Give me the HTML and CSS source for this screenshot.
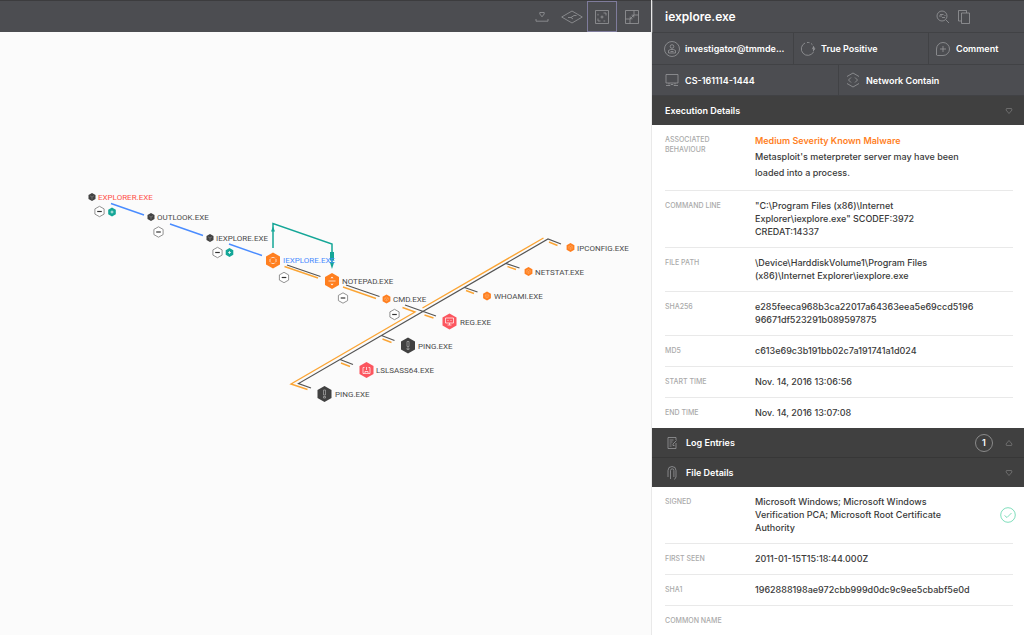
FILE: index.html
```html
<!DOCTYPE html>
<html lang="en">
<head>
<meta charset="utf-8">
<title>iexplore.exe – Process tree</title>
<link rel="stylesheet" href="styles.css">
</head>
<body>
<div class="app">
  <main class="workspace">
    <div class="toolbar" role="toolbar" aria-label="Tree tools">
      <button class="tool" aria-label="Collapse"><svg width="14" height="14" viewBox="0 0 14 14"><path d="M1 9v2.200h12V9M4.800 2.500h4.400v1.500L7 6.800 4.800 4z"/></svg></button>
      <button class="tool" aria-label="Perspective"><svg width="22" height="14" viewBox="0 0 22 14"><path d="M.700 7 11 1 21.300 7 11 13zM7 7.500h3l3-2M10 7.500l2 1.500M13 5.500h2.500"/></svg></button>
      <button class="tool tool-active" aria-label="Fit to screen" aria-pressed="true"><svg width="14" height="14" viewBox="0 0 14 14"><path d="M.5.5h13v13H.5zM8.500 3H11v2.500M3 8.500V11h2.500M3 5.500V3.800M8.500 11h1.700"/><circle cx="7" cy="7" r="1"/></svg></button>
      <button class="tool" aria-label="Expand"><svg width="14" height="14" viewBox="0 0 14 14"><path d="M.5.5h13v13H.5zM.5 9h4.500v4.500M13.500 5H9V.5M5 9l4-4M5.200 6.500v2.300h2.300M6.500 5.200h2.300v2.300"/></svg></button>
    </div>
    <svg class="tree" width="651" height="603" viewBox="0 32 651 603" role="img" aria-label="Process tree">
      <defs>
        <path id="hex" d="M0-8 7-4V4L0 8-7 4V-4z"/>
        <path id="hex-small" d="M0-4.500 3.900-2.300V2.300L0 4.500-3.900 2.300V-2.300z"/>
        <g id="cube"><path d="M0-4 3.500-2V2L0 4-3.500 2V-2z"/><path class="cube-mark" d="M-2-1.200 0 0l2-1.200M0 0v2.500"/></g>
        <g id="minus"><path class="minus-ring" d="M0-5.200 4.600-2.600V2.600L0 5.200-4.600 2.600V-2.600z"/><path class="minus-bar" d="M-2.300 0h4.600"/></g>
        <g id="plus"><path d="M0-4.400 3.800-2.200V2.200L0 4.400-3.800 2.200V-2.200z"/><path class="plus-mark" d="M-1.500 0h3M0-1.500v3"/></g>
        <g id="small-target"><use href="#hex-small"/><path class="small-mark" d="M0-2 1.800-1V1L0 2-1.800 1V-1zM-1.800-1 0 0l1.800-1M0 0v2"/></g>
      </defs>
      <g class="edge edge-blue"><path d="M111 203.500 144 215M170 224l33 11.500M229 244l33 11.500"/></g>
      <g class="edge edge-dark"><path d="M287 265l33.500 11.500M346 285l33.500 11.500M405 305l31 11M311 388l-12.500-4.500L548 239l13 5M381.500 335.500l13 5M340 359.500l13 5M464.500 287.500l13 4.500M506 263.500l13.500 4.500"/></g>
      <g class="edge edge-orange"><path d="M284.500 266.500l33.500 11.500M343 287l33 11.500M402.500 307.500l12.500 4.500-124 72 16.500 5.500M422.500 308l121-70M382.500 339l9 3.500M341 363l9 3.500M424.500 315l9 3M466 290.500l8 3M507.500 266.500l8.500 3M549 242l8.500 3.500"/></g>
      <g class="edge edge-teal"><path d="M273 248v-24.500L332 244v22"/></g>
      <path class="teal" d="M273 226.500l2 5h-4zM330 252h4v8.500h-4zM329.800 262h4.400l-2.200 7z"/>
      <g class="dark"><use href="#cube" x="92" y="197"/><use href="#cube" x="151" y="217"/><use href="#cube" x="210" y="238"/><use href="#hex" x="408" y="345.500"/><use href="#hex" x="324.500" y="394"/></g>
      <g class="orange"><use href="#hex" x="273" y="260.500"/><use href="#hex" x="332" y="281"/><use href="#small-target" x="386.500" y="299"/><use href="#small-target" x="487" y="296"/><use href="#small-target" x="528.500" y="271.500"/><use href="#small-target" x="570.500" y="247.500"/></g>
      <g class="red"><use href="#hex" x="449.500" y="321.500"/><use href="#hex" x="366.500" y="370"/></g>
      <g class="glyph">
        <path d="M271.500 257.500h3M276 259v3M274.500 263.500h-3M270 262v-3M270.300 257.800l.6.600M275.700 257.800l-.6.600M270.300 263.200l.6-.6M275.700 263.200l-.6-.6"/>
        <path d="M328.500 281h7M332 277v1.500M332 283.500v1.500M330.800 278l1.200-1 1.200 1M330.800 284l1.200 1 1.200-1"/>
        <path d="M445.500 318h8v5h-8zM447.500 325h4M449.500 323v2M447.500 320.500h1M450.500 320.500h1"/>
        <path d="M364.500 367.500h-1.500v6h7v-6h-1.500M366.500 367v3M365 373v-1.500h3v1.500"/>
        <path class="glyph-dim" d="M407 341.500h2v5h-2zM407 348h2v1.500h-2zM323.500 390h2v5h-2zM323.500 396.500h2v1.500h-2z"/>
      </g>
      <g><use href="#minus" x="99.500" y="211.500"/><use href="#minus" x="158.500" y="232"/><use href="#minus" x="217.500" y="252.500"/><use href="#minus" x="284" y="277.500"/><use href="#minus" x="343" y="298"/><use href="#minus" x="394.500" y="314.500"/></g>
      <g class="teal"><use href="#plus" x="112" y="212"/><use href="#plus" x="229.500" y="252.500"/></g>
      <g class="names">
        <text class="name-red" x="98" y="200">EXPLORER.EXE</text>
        <text x="157" y="220">OUTLOOK.EXE</text>
        <text x="216" y="241">IEXPLORE.EXE</text>
        <text class="name-blue" x="283" y="263">IEXPLORE.EXE</text>
        <text x="342" y="284">NOTEPAD.EXE</text>
        <text x="393" y="302">CMD.EXE</text>
        <text x="460" y="325">REG.EXE</text>
        <text x="418" y="349">PING.EXE</text>
        <text x="376" y="373">LSLSASS64.EXE</text>
        <text x="335" y="397">PING.EXE</text>
        <text x="494" y="299">WHOAMI.EXE</text>
        <text x="535" y="275">NETSTAT.EXE</text>
        <text x="577" y="251">IPCONFIG.EXE</text>
      </g>
    </svg>
  </main>

  <aside class="panel">
    <header class="panel-title">
      <h1>iexplore.exe</h1>
      <div class="title-actions">
        <button class="icon-button" aria-label="Search events"><svg width="14" height="14" viewBox="0 0 14 14"><circle cx="6" cy="6" r="5"/><path d="M10 10l3 3M4 4.500h3.500M3 6h3M6 7.500h3M8.500 5.500h1"/></svg></button>
        <button class="icon-button" aria-label="Copy"><svg width="14" height="16" viewBox="0 0 14 16"><path d="M4.500 4h8v10.500h-8zM4.500 12h-3V1.500h8V4"/></svg></button>
      </div>
    </header>
    <div class="tiles tiles-three">
      <button class="tile tile-lead"><svg width="16" height="16" viewBox="0 0 16 16"><circle cx="8" cy="8" r="7.500"/><circle cx="8" cy="5.500" r="1.800"/><path d="M4.500 12V9.500L6.500 8.500h3l2 1V12zM6.500 10.500h3"/></svg><span>investigator@tmmde...</span></button>
      <button class="tile"><svg width="16" height="16" viewBox="0 0 16 16"><path d="M5 2a6.500 6.500 0 1 0 8.500 9M7 1.500a6.500 6.500 0 0 1 2.500.2M11 2.400l1.500 1.400M13.500 5.200v5.200M12.300 8.200l1.200-2.400 1.500 2.200-1.500 1.200"/></svg><span>True Positive</span></button>
      <button class="tile"><svg width="16" height="16" viewBox="0 0 16 16"><path d="M1.500 14V8A6.500 6.500 0 1 1 8 14.500H2.500zM8 5v6M5 8h6"/></svg><span>Comment</span></button>
    </div>
    <div class="tiles tiles-two">
      <button class="tile tile-lead"><svg width="16" height="16" viewBox="0 0 16 16"><path d="M2 2.500h12v8.500H2zM5 11v1.500M11 11v1.500M2 13.500h4l1-1h2l1 1h4"/></svg><span>CS-161114-1444</span></button>
      <button class="tile"><svg width="16" height="16" viewBox="0 0 16 16"><path d="M2 4.500 8 1l6 3.500M2 11.500 8 15l6-3.500M6 5.500 3.500 8 6 10.500M10 5.500 12.500 8 10 10.500"/></svg><span>Network Contain</span></button>
    </div>

    <section>
      <h2><button class="section-head" aria-expanded="true"><span class="section-name">Execution Details</span><svg class="caret" width="8" height="8" viewBox="0 0 8 8"><path d="M1.500 1.500h5L7 3 4 6.500 1 3z"/></svg></button></h2>
      <dl class="details">
        <div class="row row-lead"><dt>ASSOCIATED BEHAVIOUR</dt><dd><strong class="severity">Medium Severity Known Malware</strong><br>Metasploit's meterpreter server may have been<br>loaded into a process.</dd></div>
        <div class="row"><dt>COMMAND LINE</dt><dd>"C:\Program Files (x86)\Internet<br>Explorer\iexplore.exe" SCODEF:3972<br>CREDAT:14337</dd></div>
        <div class="row"><dt>FILE PATH</dt><dd>\Device\HarddiskVolume1\Program Files<br>(x86)\Internet Explorer\iexplore.exe</dd></div>
        <div class="row"><dt>SHA256</dt><dd>e285feeca968b3ca22017a64363eea5e69ccd5196<br>96671df523291b089597875</dd></div>
        <div class="row"><dt>MD5</dt><dd>c613e69c3b191bb02c7a191741a1d024</dd></div>
        <div class="row"><dt>START TIME</dt><dd>Nov. 14, 2016 13:06:56</dd></div>
        <div class="row"><dt>END TIME</dt><dd>Nov. 14, 2016 13:07:08</dd></div>
      </dl>
    </section>

    <section>
      <h2><button class="section-head section-head-ruled" aria-expanded="false"><svg width="14" height="14" viewBox="1 0 14 14"><path d="M12 7v5.500H4v-11h8V4M5.500 4h4M5.500 6h3M5.500 8h2M5.500 10h2M12.500 4.500 9 8v1.500h1.500"/></svg><span class="section-name">Log Entries</span><span class="count">1</span><svg class="caret" width="8" height="8" viewBox="0 0 8 8"><path d="M1.500 6.500h5L7 5 4 1.500 1 5z"/></svg></button></h2>
    </section>

    <section>
      <h2><button class="section-head" aria-expanded="true"><svg width="14" height="16" viewBox="1 0 14 16"><path d="M4 12V5.500a4 4 0 0 1 8 0V12L10.500 14.500M6.500 14V5.500a1.700 1.700 0 0 1 3.400 0V12"/></svg><span class="section-name">File Details</span><svg class="caret" width="8" height="8" viewBox="0 0 8 8"><path d="M1.500 1.500h5L7 3 4 6.500 1 3z"/></svg></button></h2>
      <dl class="details">
        <div class="row"><dt>SIGNED</dt><dd>Microsoft Windows; Microsoft Windows<br>Verification PCA; Microsoft Root Certificate<br>Authority</dd><dd class="verified"><svg width="16" height="16" viewBox="0 0 16 16" role="img" aria-label="Verified"><circle cx="8" cy="8" r="7.300"/><path d="M4.500 8.500 7 10.500 11.500 6"/></svg></dd></div>
        <div class="row"><dt>FIRST SEEN</dt><dd>2011-01-15T15:18:44.000Z</dd></div>
        <div class="row"><dt>SHA1</dt><dd>1962888198ae972cbb999d0dc9c9ee5cbabf5e0d</dd></div>
        <div class="row"><dt>COMMON NAME</dt><dd></dd></div>
      </dl>
    </section>
  </aside>
</div>
</body>
</html>
```
FILE: styles.css
```css
* { box-sizing: border-box; }

body {
  margin: 0;
  font-family: Inter, "Liberation Sans", sans-serif;
  font-size: 9px;
  line-height: 13px;
  color: #3a3a3a;
  background: #fbfbfb;
}

h1, h2, dl, dd { margin: 0; }

button {
  margin: 0;
  padding: 0;
  border: 0;
  background: none;
  color: inherit;
  font: inherit;
  cursor: pointer;
}

svg { flex: none; display: block; fill: none; stroke: #97989b; stroke-width: 0.8; }

.app {
  display: grid;
  grid-template-columns: minmax(0, 1fr) 372px;
  height: 100vh;
  overflow: hidden;
}

.workspace { overflow: hidden; border-right: 1px solid #e9e9e9; }

.toolbar {
  display: flex;
  justify-content: flex-end;
  height: 32px;
  padding-right: 4px;
  background: #4c4d51;
  border-top: 1px solid #3c3c3e;
}

.tool {
  display: flex;
  align-items: center;
  justify-content: center;
  width: 30px;
  height: 31px;
  border: 1px solid transparent;
}

.tool-active { border-color: #7f7c9c; }

/* Process tree */
.tree { stroke: none; }
.edge { stroke-width: 1.2; fill: none; }
.edge-blue { stroke: #4a8cff; stroke-width: 1.4; }
.edge-dark { stroke: #555; }
.edge-orange { stroke: #fba535; stroke-width: 1.4; }
.edge-teal { stroke: #14a697; stroke-width: 1.5; }
.teal { fill: #14a697; }
.dark { fill: #414141; }
.orange { fill: #ff7f1f; }
.red { fill: #fc565f; }
.cube-mark { stroke: #8a8a8a; stroke-width: 0.6; fill: none; }
.small-mark { stroke: #ffb070; stroke-width: 0.5; fill: none; }
.minus-ring { fill: #fff; stroke: #777; stroke-width: 0.8; }
.minus-bar { stroke: #333; stroke-width: 1.2; }
.plus-mark { stroke: #fff; stroke-width: 0.7; }
.glyph { stroke: #fff; stroke-width: 0.7; }
.glyph-dim { stroke: #aaa; }
.names { font-family: Roboto, sans-serif; font-size: 8px; fill: #4b4b4b; }
.name-red { fill: #ff5148; }
.name-blue { fill: #4a8cff; }

/* Details panel */
.panel { overflow: hidden; background: #fff; }

.panel-title {
  display: flex;
  align-items: center;
  justify-content: space-between;
  height: 33px;
  padding: 1px 53px 0 12px;
  color: #fff;
  background: #4c4d51;
  border-top: 1px solid #3c3c3e;
  border-bottom: 1px solid #414245;
  border-left: 1px solid #77787b;
}

h1 { font-size: 12px; line-height: 16px; font-weight: 600; }

.title-actions { display: flex; align-items: center; gap: 7px; }

.tiles {
  display: grid;
  color: #fff;
  background: #4c4d51;
  border-bottom: 1px solid #414245;
}

.tiles-three { height: 32px; grid-template-columns: 141fr 135fr 96fr; }
.tiles-two { height: 31px; grid-template-columns: 1fr 1fr; }

.tile {
  display: flex;
  align-items: center;
  gap: 5px;
  min-width: 0;
  padding-left: 6px;
  font-weight: 600;
  white-space: nowrap;
}

.tile-lead { padding-left: 12px; }
.tile + .tile { border-left: 1px solid #414245; }

h2 { font-size: 9px; line-height: 13px; font-weight: 600; }

.section-head {
  display: flex;
  align-items: center;
  gap: 7px;
  width: 100%;
  height: 29px;
  padding: 0 11px 0 13px;
  color: #fff;
  background: #404040;
  text-align: left;
}

.section-head-ruled { height: 30px; border-bottom: 1px solid #373737; }
.section-name { flex: 1; }

.count {
  width: 18px;
  height: 18px;
  margin-right: 5px;
  border: 1px solid #8a8a8a;
  border-radius: 50%;
  line-height: 16px;
  text-align: center;
}

.caret { stroke: #777; }

.details { padding: 0 11px 0 13px; }

.row {
  display: grid;
  grid-template-columns: 60px minmax(0, 1fr) auto;
  column-gap: 30px;
  min-height: 31px;
  padding: 8px 0 9px;
  border-bottom: 1px solid #e9e9e9;
  font-weight: 500;
}

.row:last-child { min-height: 30px; padding-bottom: 8px; border-bottom: 0; }
.row-lead { line-height: 16px; }

dt {
  padding-top: 2px;
  color: #aaa;
  font-size: 7px;
  line-height: 10px;
}

.severity { color: #ff7f1f; font-weight: 600; }
.verified { align-self: center; margin-right: -3px; }
.verified svg { stroke: #5fd6ab; }
```
